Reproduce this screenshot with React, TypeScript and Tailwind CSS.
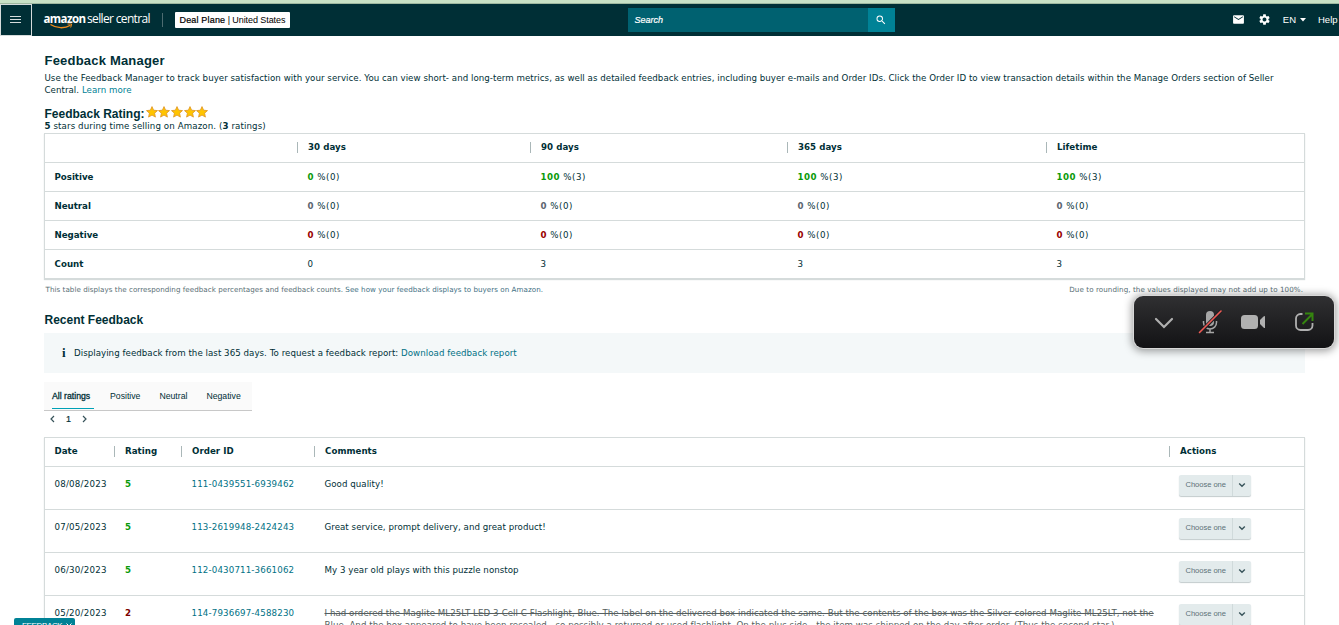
import {ReactNode} from "react";
import {MdEmail, MdSearch, MdSettings} from "react-icons/md";

const summaryColumns = ["30 days", "90 days", "365 days", "Lifetime"];

const summaryRows = [
    {label: "Positive", color: "text-[#0a9a0a]", values: ["0", "100", "100", "100"], counts: ["0", "3", "3", "3"]},
    {label: "Neutral", color: "text-[#5c6670]", values: ["0", "0", "0", "0"], counts: ["0", "0", "0", "0"]},
    {label: "Negative", color: "text-[#990000]", values: ["0", "0", "0", "0"], counts: ["0", "0", "0", "0"]},
];

const feedback = [
    {date: "08/08/2023", rating: 5, order: "111-0439551-6939462", comment: "Good quality!"},
    {date: "07/05/2023", rating: 5, order: "113-2619948-2424243", comment: "Great service, prompt delivery, and great product!"},
    {date: "06/30/2023", rating: 5, order: "112-0430711-3661062", comment: "My 3 year old plays with this puzzle nonstop"},
];

const summaryGrid = "grid grid-cols-[252px_233px_257px_259px_1fr]";
const feedbackGrid = "grid grid-cols-[69px_67px_133px_855px_1fr]";

function HeadCell({children}: { children: ReactNode }) {
    return (
        <div className="flex items-center pb-[2px]">
            <span className="h-[11px] w-px bg-[#aab7b8]"></span>
            <span className="pl-[10px] font-bold">{children}</span>
        </div>
    );
}

function Star() {
    return (
        <svg width="12" height="12" viewBox="0 0 12 12">
            <path d="M6 .6l1.6 3.6 3.9.4-2.9 2.6.8 3.9L6 9.1l-3.4 2 .8-3.9L.5 4.6l3.9-.4z"
                  fill="#ffc400" stroke="#dd9323" strokeWidth=".8" strokeLinejoin="round"/>
        </svg>
    );
}

function ActionSelect() {
    return (
        <button className="mt-[8px] ml-[10px] flex h-[21px] w-[72px] rounded-[2px] bg-[#e3ebec] text-[#5c7178] shadow-[0_1px_1px_#c3cbcd]">
            <span className="flex h-full w-[54px] items-center border-r border-[#d0dadb] pb-[2px] pl-[6.5px] font-['Liberation_Sans',sans-serif] text-[7.6px] tracking-[-0.05px] whitespace-nowrap">
                Choose one
            </span>
            <span className="flex h-full flex-1 items-center justify-center pb-[1px]">
                <svg width="8" height="6" viewBox="0 0 8 6">
                    <path d="M1.2 1.5L4 4.2l2.8-2.7" fill="none" stroke="#37535a" strokeWidth="1.4"/>
                </svg>
            </span>
        </button>
    );
}

function Header() {
    return (
        <header className="flex h-8 bg-[#002f36] font-['Liberation_Sans',sans-serif] tracking-normal text-white">
            <button className="flex h-8 w-[31.5px] shrink-0 items-center justify-center border border-[#d5dbdb]">
                <svg width="11" height="8" viewBox="0 0 11 8">
                    <path d="M0 .5h11M0 3.5h11M0 6.5h11" stroke="#d5dbdb"/>
                </svg>
            </button>

            {/* Logo */}
            <div className="relative ml-[12px] flex w-[118px] items-start pt-[7px] font-['Open_Sans',sans-serif] text-[12px] leading-[16px] whitespace-nowrap">
                <span className="w-[43.5px] text-[11.5px] font-bold tracking-[-0.6px]">amazon</span>
                <span className="tracking-[-0.65px]">seller central</span>
                <svg className="absolute top-[19px] left-[6px]" width="23" height="7" viewBox="0 0 23 7">
                    <path d="M.5 1.5c6 4 14 4.300 20 .8" fill="none" stroke="#f08c1c" strokeWidth="1.300"/>
                    <path d="M17.500 1h4.200l-1 3.500" fill="none" stroke="#f08c1c"/>
                </svg>
            </div>
            <div className="mt-[9px] h-[14px] w-px bg-[#4d6c71]"></div>
            <div className="mt-[8px] ml-[12px] flex h-[15.500px] w-[115px] items-center rounded-[1px] bg-white pl-[5px] text-[9px] whitespace-nowrap text-black">
                <span className="font-medium tracking-[0.17px] [-webkit-text-stroke:0.2px_black]">Deal Plane</span>
                <span className="tracking-[-0.08px]">&nbsp;| United States</span>
            </div>

            <div className="mt-[4px] ml-[338px] flex h-6 w-[267px]">
                <div className="flex flex-1 items-center bg-[#006170] pl-[7px] text-[9px] italic [-webkit-text-stroke:0.2px_white]">Search</div>
                <div className="flex w-[27px] items-center justify-center bg-[#008296]">
                    <MdSearch size={12}/>
                </div>
            </div>

            <div className="ml-auto flex h-[31px] items-center text-[9.5px]">
                <MdEmail size={13}/>
                <MdSettings size={13} className="ml-[13px]"/>
                <span className="ml-[12px]">EN</span>
                <svg className="ml-[4px]" width="6" height="4" viewBox="0 0 6 4">
                    <path d="M0 0h6L3 3.500z" fill="white"/>
                </svg>
                <span className="ml-[12px] w-[21px]">Help</span>
            </div>
        </header>
    );
}

function SummaryTable() {
    return (
        <div className="h-[146px] border border-[#d5dbdb] shadow-[0_1px_1px_#d5dbdb]">
            <div className={`${summaryGrid} h-[28px]`}>
                <span></span>
                {summaryColumns.map((title) => <HeadCell key={title}>{title}</HeadCell>)}
            </div>
            {summaryRows.map((row) => (
                <div key={row.label} className={`${summaryGrid} h-[29px] items-center border-t border-[#d5dbdb]`}>
                    <span className="pl-[9.5px] font-bold tracking-[-0.02px]">{row.label}</span>
                    {row.values.map((value, i) => (
                        <span key={i} className="pl-[10.5px] tracking-[0.5px]">
                            <b className={row.color}>{value}</b> %({row.counts[i]})
                        </span>
                    ))}
                </div>
            ))}
            <div className={`${summaryGrid} h-[29px] items-center border-t border-[#d5dbdb]`}>
                <span className="pl-[9.5px] font-bold">Count</span>
                {["0", "3", "3", "3"].map((count, i) => <span key={i} className="pl-[10.5px]">{count}</span>)}
            </div>
        </div>
    );
}

function FeedbackTable() {
    return (
        <div className="mt-[10px] border border-[#d5dbdb] shadow-[0_1px_1px_#d5dbdb]">
            <div className={`${feedbackGrid} h-[28px]`}>
                <span className="flex items-center pb-[2px] pl-[9.5px] font-bold">Date</span>
                <HeadCell>Rating</HeadCell>
                <HeadCell>Order ID</HeadCell>
                <HeadCell>Comments</HeadCell>
                <HeadCell>Actions</HeadCell>
            </div>
            {feedback.map((item) => (
                <div key={item.order} className={`${feedbackGrid} h-[43px] border-t border-[#d5dbdb] leading-[12px]`}>
                    <span className="pt-[11px] pl-[9.5px] tracking-[0.23px]">{item.date}</span>
                    <b className="pt-[11px] pl-[11px] text-[#0a9a0a]">{item.rating}</b>
                    <span className="pt-[11px] pl-[10.5px] tracking-[0.15px] text-[#007185]">{item.order}</span>
                    <span className="pt-[11px] pl-[10.5px]">{item.comment}</span>
                    <ActionSelect/>
                </div>
            ))}
            <div className={`${feedbackGrid} h-[60px] border-t border-[#d5dbdb] leading-[12px]`}>
                <span className="pt-[11px] pl-[9.5px] tracking-[0.23px]">05/20/2023</span>
                <b className="pt-[11px] pl-[11px] text-[#7d0000]">2</b>
                <span className="pt-[11px] pl-[10.5px] tracking-[0.15px] text-[#007185]">114-7936697-4588230</span>
                <span className="pt-[11px] pl-[10.5px] whitespace-nowrap text-[#565f60] line-through">
                    I had ordered the Maglite ML25LT LED 3-Cell C Flashlight, Blue. The label on the delivered box indicated the same. But the contents of the box was the Silver colored Maglite ML25LT, not the<br/>
                    Blue. And the box appeared to have been resealed - so possibly a returned or used flashlight. On the plus side - the item was shipped on the day after order. (Thus the second star.)
                </span>
                <ActionSelect/>
            </div>
        </div>
    );
}

function MeetingControls() {
    return (
        <div className="absolute top-[296px] left-[1134px] flex h-[52px] w-[200px] items-center rounded-[9px] bg-linear-to-b from-[#303032] to-[#131315] shadow-[0_0_0_1px_#d8d8d8,0_1px_8px_2px_#00000066]">
            <svg width="200" height="52" viewBox="0 0 200 52" fill="none">
                <path d="M22 23l8 8 8-8" stroke="#b0b0b0" strokeWidth="2.200" strokeLinecap="round"/>
                {/* Muted microphone */}
                <rect x="72" y="15" width="8" height="15" rx="4" fill="#a6a6a6"/>
                <path d="M69.500 25v1.500a6.500 6.500 0 0013 0V25M76 33v4M72 36.500h8" stroke="#a6a6a6" strokeWidth="1.500"/>
                <path d="M65.500 37L87 15" stroke="#202022" strokeWidth="3.500"/>
                <path d="M65.500 36.500L87 15" stroke="#ef5a55" strokeWidth="1.600" strokeLinecap="round"/>
                {/* Camera */}
                <rect x="107" y="19" width="17" height="14" rx="3.500" fill="#b0b0b0"/>
                <path d="M126 24l3.500-3.500q1.500-1 1.500 0v11q0 1-1.500 0L126 28z" fill="#b0b0b0"/>
                {/* Share */}
                <path d="M168.500 18h-2a4.500 4.500 0 00-4.500 4.500v7a4.500 4.500 0 004.500 4.500h7.500a4.500 4.500 0 004.500-4.500V27" stroke="#b0b0b0" strokeWidth="1.800"/>
                <path d="M168.500 28l9.500-9.500M171 17.500h7.500V25" stroke="#35850f" strokeWidth="2"/>
            </svg>
        </div>
    );
}

export default function App() {
    return (
        <div className="relative h-[625px] w-[1339px] overflow-hidden bg-white font-['DejaVu_Sans',sans-serif] text-[8.67px] leading-[12px] tracking-[0.039px] text-[#002f36]">
            <div className="h-1 border-b border-[#9fb8a0] bg-[#c8e1c6]"></div>
            <Header/>

            <main className="ml-[44px] w-[1261px]">
                <h1 className="pt-[17px] pl-[0.5px] font-['Liberation_Sans',sans-serif] text-[13px] leading-[16px] font-bold tracking-[0.2px]">Feedback Manager</h1>
                <p className="mt-[3px] pl-[0.5px] whitespace-nowrap">
                    Use the Feedback Manager to track buyer satisfaction with your service. You can view short- and long-term metrics, as well as detailed feedback entries, including buyer e-mails and Order IDs. Click the Order ID to view transaction details within the Manage Orders section of Seller<br/>
                    Central. <a className="text-[#008296]">Learn more</a>
                </p>

                {/* Rating */}
                <div className="mt-[9px] flex h-[15px] items-center">
                    <h2 className="mt-[2px] w-[101.5px] pl-[0.5px] font-['Liberation_Sans',sans-serif] text-[12px] font-bold whitespace-nowrap tracking-[0px]">Feedback Rating:</h2>
                    <div className="mb-[2px] flex gap-[0.7px]">
                        <Star/><Star/><Star/><Star/><Star/>
                    </div>
                </div>
                <p className="mb-[1px] pl-[0.5px] tracking-[0.1px]"><b>5</b> stars during time selling on Amazon. (<b>3</b> ratings)</p>

                <SummaryTable/>
                <div className="mt-[5px] flex h-[11px] justify-between pr-[2px] pl-[1.5px] text-[7.15px] leading-[11px] whitespace-nowrap text-[#596f75]">
                    <span>This table displays the corresponding feedback percentages and feedback counts. <a className="text-[#3f7184]">See how your feedback displays to buyers on Amazon.</a></span>
                    <span className="tracking-[0.07px]">Due to rounding, the values displayed may not add up to 100%.</span>
                </div>

                <h2 className="mt-[17px] h-[16px] pl-[0.5px] font-['Liberation_Sans',sans-serif] text-[12px] leading-[16px] font-bold tracking-[0px]">Recent Feedback</h2>
                <div className="mt-[5px] flex h-[40px] items-center bg-[#f4f8f9]">
                    <span className="w-[30px] pl-[18px] font-['Liberation_Serif',serif] text-[13px] font-bold">i</span>
                    <span>Displaying feedback from the last 365 days. To request a feedback report: <a className="text-[#007185]">Download feedback report</a></span>
                </div>

                {/* Filter tabs */}
                <div className="mt-[9px] flex h-[29px] w-[208px] gap-[16px] border-b border-[#c8c8c8] bg-[#fafafa] pl-[8px] font-['Liberation_Sans',sans-serif] text-[8.7px] leading-[28px] tracking-normal whitespace-nowrap">
                    <span className="h-[27px] w-[42px] border-b border-b-[#00a1b6] [-webkit-text-stroke:0.3px_#002f36]">All ratings</span>
                    <span>Positive</span>
                    <span className="ml-[3px]">Neutral</span>
                    <span className="ml-[3px]">Negative</span>
                </div>
                <div className="flex h-[16px] items-center pl-[6px]">
                    <svg width="5" height="8" viewBox="0 0 5 8"><path d="M4 1L1 4l3 3" fill="none" stroke="#37535a" strokeWidth="1.200"/></svg>
                    <span className="w-[27px] text-center font-['Liberation_Sans',sans-serif] text-[9px] [-webkit-text-stroke:0.2px_#002f36]">1</span>
                    <svg width="5" height="8" viewBox="0 0 5 8"><path d="M1 1l3 3-3 3" fill="none" stroke="#37535a" strokeWidth="1.200"/></svg>
                </div>

                <FeedbackTable/>
            </main>

            <MeetingControls/>

            {/* Feedback tab at the bottom edge */}
            <div className="absolute top-[618px] left-[14px] flex h-[16px] w-[61px] rounded-t-[2px] bg-[#008296] pl-[8px] font-['Liberation_Sans',sans-serif] text-[8px] leading-[16px] tracking-[-0.35px] whitespace-nowrap text-white">
                FEEDBACK
                <svg className="mt-[5px] ml-[4px]" width="6" height="6" viewBox="0 0 6 6"><path d="M.5.500l5 5M5.500.500l-5 5" stroke="white"/></svg>
            </div>
        </div>
    );
}
